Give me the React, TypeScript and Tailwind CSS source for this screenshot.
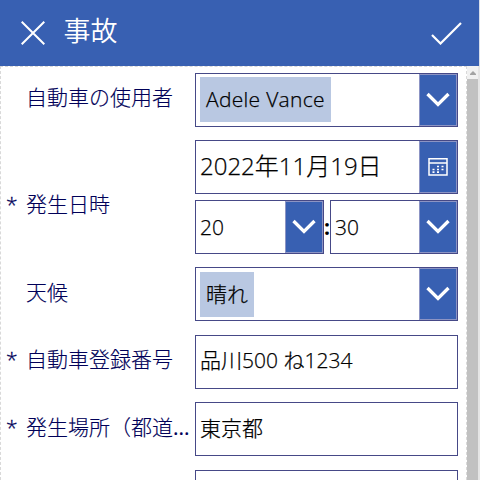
import type { ReactNode } from "react";

const font = "font-['Open_Sans','Noto_Sans_CJK_JP',sans-serif]";

function Chevron() {
  return (
    <svg width="24" height="16" viewBox="0 0 24 16" fill="none" className="shrink-0">
      <path d="M1.5 2L12 12.5L22.5 2" stroke="white" strokeWidth="3.3" />
    </svg>
  );
}

function Calendar() {
  return (
    <svg width="20" height="18" viewBox="0 0 20 18" fill="none" className="shrink-0">
      <path d="M1 .75H19V17H1ZM1 5H19" stroke="white" strokeWidth="1.5" />
      <path
        d="M9 8.5h2M13.5 8.5h2M4.5 11.5h2M9 11.5h2M13.5 11.5h2M4.5 14.2h2M9 14.2h2"
        stroke="white"
        strokeWidth="1.7"
      />
    </svg>
  );
}

function Field({ children, icon, className = "w-[263px]" }: { children?: ReactNode; icon?: ReactNode; className?: string }) {
  return (
    <div className={`flex h-[54px] shrink-0 border border-[#464987] bg-white text-[21px] leading-[52px] text-black ${className}`}>
      <div className="flex min-w-0 flex-1 items-center whitespace-nowrap pl-1 font-light [-webkit-text-stroke:0.25px_black]">
        {children}
      </div>
      {icon && (
        <div className="flex w-[38px] items-center justify-center border border-[#8c94c4] bg-[#3860b2]">{icon}</div>
      )}
    </div>
  );
}

function Tag({ children, className = "" }: { children: ReactNode; className?: string }) {
  return (
    <span className={`flex h-[45px] items-center bg-[#b9c8e2] px-[6px] leading-[45px] ${className}`}>{children}</span>
  );
}

function Row({ label, required, low, children }: { label: ReactNode; required?: boolean; low?: boolean; children: ReactNode }) {
  return (
    <div className="flex items-center">
      <div className={`flex w-[189px] shrink-0 whitespace-nowrap text-[21px] font-light leading-[30px] text-[#000058] [-webkit-text-stroke:0.15px_#000058] ${low ? "pt-[14px]" : "pb-[5px]"}`}>
        <span className="w-[20px] shrink-0 [-webkit-text-stroke:0.3px_#000058]">{required ? "*" : ""}</span>
        <span>{label}</span>
      </div>
      {children}
    </div>
  );
}

export default function App() {
  return (
    <div className={`flex h-[480px] w-[480px] flex-col overflow-hidden bg-white ${font}`}>
      <header className="flex h-[66px] shrink-0 items-center border-r border-[#d9deea] bg-[#3860b2] pl-[21px] pr-[17px] text-white">
        <svg width="24" height="24" viewBox="0 0 24 24" fill="none">
          <path d="M.7.7L23.3 23.3M23.3.7L.7 23.3" stroke="white" strokeWidth="2" />
        </svg>
        <h1 className="ml-[18.5px] flex-1 pb-[4px] text-[27px] font-[350] leading-[40px]">事故</h1>
        <svg width="31" height="24" viewBox="0 0 31 24" fill="none">
          <path d="M1 14L9.5 22.5L30 2" stroke="white" strokeWidth="2.2" />
        </svg>
      </header>
      <div className="flex min-h-0 flex-1">
        <main className="flex w-[467px] shrink-0 flex-col gap-[13.36px] overflow-hidden border border-b-0 border-dashed border-[#d9d9d9] pl-[5px] pt-[5.73px]">
          <Row label="自動車の使用者">
            <Field icon={<Chevron />}><Tag className="tracking-[0.29px]">Adele Vance</Tag></Field>
          </Row>
          <Row label="発生日時" required low>
            <div className="flex flex-col gap-[6px]">
              <Field icon={<Calendar />}>
                <span className="pb-[3px] text-[24px]">2022年11月19日</span>
              </Field>
              <div className="flex items-center">
                <Field className="w-[129px]" icon={<Chevron />}>20</Field>
                <span className="w-[6px] text-[21px] font-bold leading-[30px]">:</span>
                <Field className="w-[128px]" icon={<Chevron />}>30</Field>
              </div>
            </div>
          </Row>
          <Row label="天候">
            <Field icon={<Chevron />}><Tag>晴れ</Tag></Field>
          </Row>
          <Row label="自動車登録番号" required>
            <Field><span className="pb-[3px]">品川500 ね1234</span></Field>
          </Row>
          <Row label={<>発生場所（都道<span className="font-normal">...</span></>} required>
            <Field><span className="pb-[3px]">東京都</span></Field>
          </Row>
          <Row label=""><Field /></Row>
        </main>
        <div className="flex w-[13px] flex-col border-r-2 border-[#e5e5e5] bg-[#c1c1c1]">
          <div className="flex h-[13px] shrink-0 items-center justify-center bg-[#f1f1f1]">
            <svg width="6" height="4" viewBox="0 0 6 4"><path d="M3 0L6 3V4H0V3Z" fill="#a3a3a3" /></svg>
          </div>
        </div>
      </div>
    </div>
  );
}
